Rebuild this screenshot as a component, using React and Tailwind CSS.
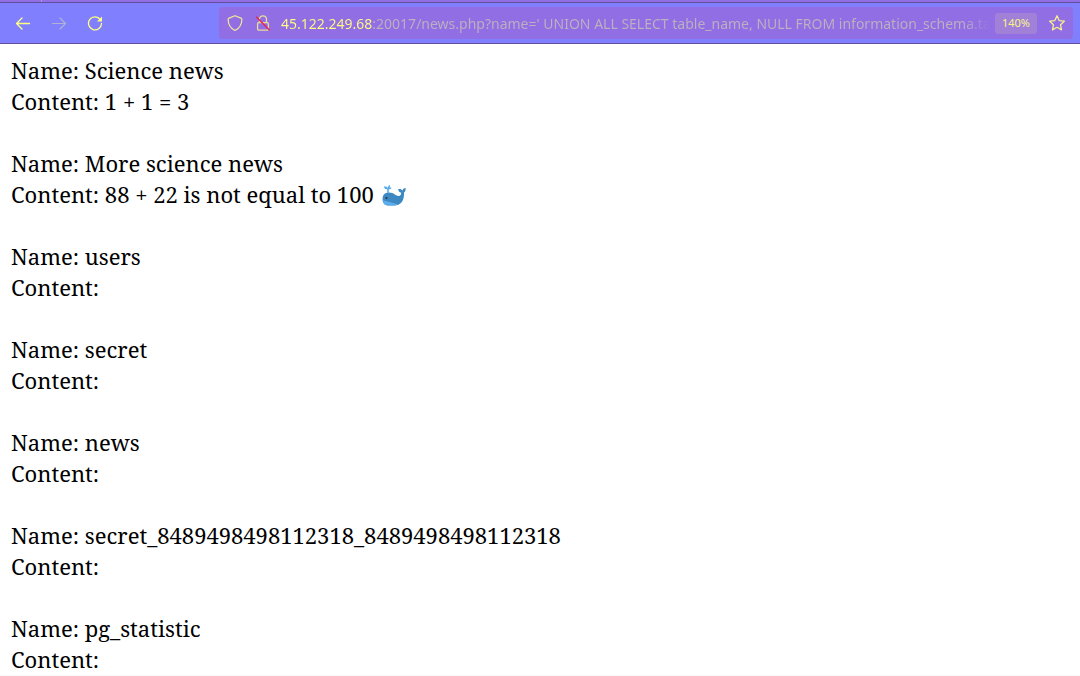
const news = [
  { name: 'Science news', content: '1 + 1 = 3' },
  { name: 'More science news', content: '88 + 22 is not equal to 100', whale: true },
  { name: 'users' },
  { name: 'secret' },
  { name: 'news' },
  { name: 'secret_8489498498112318_8489498498112318' },
  { name: 'pg_statistic' },
];

const address =
  "45.122.249.68:20017/news.php?name=' UNION ALL SELECT table_name, NULL FROM information_schema.tables--";

function Whale() {
  return (
    <svg viewBox="0 0 24 24" className="ml-2 inline-block size-6 align-[-5px]" role="img" aria-label="whale">
      <path d="M5.2 8.5V5.2C4 5.4 2.300 4.800 1.800 2.800c1.500-.5 3 0 3.900 1.100C6 2.200 6.800 1 7.600.900c.6.800.5 2-.2 2.900.7-.5 1.500-.5 2.100-.1-.3 1.300-1.500 1.800-2.700 1.600v3.200z" fill="#55acee" />
      <path d="M.6 15C.6 11 2.600 8.500 7 8.500c5 0 6.500 3.500 9.700 3.500 1.700 0 2.500-1.500 2.500-3.200-1.900-.2-3-1.700-3-3.500 1.900-.6 3.300.1 4.200 1.300.6-1.700 1.700-2.800 3.100-2.700.4 1.900-.2 3.600-1.500 4.500.4 8.200-3.200 13.100-10 13.100H6.500C2.500 21.500.6 19 .6 15z" fill="#3b88c3" />
      <path d="M.7 16.300c3 .9 5.400 1 7.800 2 2.200.9 4.500 1.300 7.500 2-1.200.8-2.500 1.200-4 1.200H6.500c-3.400 0-5.400-1.800-5.800-5.200z" fill="#5dadec" />
      <circle cx="4.500" cy="14" r="1" fill="#292f33" />
    </svg>
  );
}

function Toolbar() {
  return (
    <header className="font-['Noto_Sans',sans-serif]">
      <div className="flex h-[3px] border-b border-[#644f9e] bg-[#926ee4] pl-[41px]">
        <div className="w-px bg-[#ac96dd]" />
      </div>
      <div className="flex h-[41px] items-center border-b border-[#644f9e] bg-[#8080ff] pr-[7px] pl-[15px] text-[#ffff80]">
        <nav className="flex w-[204px] shrink-0 items-center gap-5">
          <button type="button" aria-label="Back">
            <svg viewBox="0 0 16 16" className="size-4" fill="none" stroke="currentColor" strokeWidth="1.3" strokeLinecap="round" strokeLinejoin="round">
              <path d="M14.5 8.5H1.5M7 3L1.5 8.5 7 14" />
            </svg>
          </button>
          <button type="button" aria-label="Forward" disabled className="text-[#b3b3cf]">
            <svg viewBox="0 0 16 16" className="size-4" fill="none" stroke="currentColor" strokeWidth="1.1" strokeLinecap="round" strokeLinejoin="round">
              <path d="M1.5 8.5h13M9 3l5.5 5.5L9 14" />
            </svg>
          </button>
          <button type="button" aria-label="Reload">
            <svg viewBox="0 0 16 16" className="size-4" fill="none" stroke="currentColor" strokeWidth="1.3">
              <path d="M13.3 4.6A6.5 6.5 0 1 0 14.5 8.5" strokeLinecap="round" />
              <path d="M15 1.5v5h-5z" fill="currentColor" stroke="none" />
            </svg>
          </button>
        </nav>

        <div className="flex h-8 min-w-0 flex-1 items-center rounded-[4px] bg-[#926ee4] px-2">
          <button type="button" aria-label="Tracking protection" className="mr-3 shrink-0 text-[#f0e893]">
            <svg viewBox="0 0 16 16" className="size-4" fill="none" stroke="currentColor" strokeWidth="1.2" strokeLinejoin="round">
              <path d="M8 .7l6 2.4c.6.2.9.6.9 1.2C14.8 9.5 12.6 13.4 8 15.5 3.4 13.4 1.2 9.5 1.1 4.3c0-.6.3-1 .9-1.2z" />
            </svg>
          </button>
          <button type="button" aria-label="Connection is not secure" className="mr-[10px] shrink-0 text-[#e8dd98]">
            <svg viewBox="0 0 16 16" className="size-4" fill="none" stroke="currentColor" strokeWidth="1.3">
              <path d="M4.5 7.5V4.3a3.5 3.5 0 0 1 7 0v3.2" />
              <rect x="2.6" y="7.6" width="10.8" height="7.6" rx="1.2" />
              <path d="M1.2 1.7l13.5 13.6" stroke="#e22850" strokeWidth="1.4" />
            </svg>
          </button>
          {/* host is highlighted, the rest is dimmed and fades out at the end */}
          <input
            type="text"
            aria-label="Address"
            defaultValue={address}
            className="h-8 min-w-0 flex-1 bg-[linear-gradient(to_right,#ffff80_92px,#bcb1bf_92px,#bcb1bf_calc(100%-28px),transparent)] bg-clip-text text-[14px] text-transparent outline-none"
          />
          <button type="button" className="ml-1 h-[21px] w-[42px] shrink-0 rounded-[3px] bg-[#a181d8] text-[11px] text-[#f5f586]">
            140%
          </button>
          <button type="button" aria-label="Bookmark this page" className="ml-3 shrink-0 text-[#f5ef8c]">
            <svg viewBox="0 0 16 16" className="size-4" fill="none" stroke="currentColor" strokeWidth="1.3" strokeLinejoin="round">
              <path d="M8 .8l2.2 4.8 5.1.6-3.8 3.5 1 5.2L8 12.3l-4.5 2.6 1-5.2L.7 6.2l5.1-.6z" />
            </svg>
          </button>
        </div>
      </div>
    </header>
  );
}

function App() {
  return (
    <div className="bg-white text-black">
      <Toolbar />
      <main className="space-y-[31px] border-b border-[#f9f9fa] px-[11px] pt-[11px] font-['Noto_Serif','Droid_Serif','DejaVu_Serif',serif] text-[22px] leading-[31px]">
        {news.map((item) => (
          <article key={item.name}>
            <p>Name: {item.name}</p>
            <p>
              Content: {item.content}
              {item.whale && <Whale />}
            </p>
          </article>
        ))}
      </main>
    </div>
  );
}

export default App;
